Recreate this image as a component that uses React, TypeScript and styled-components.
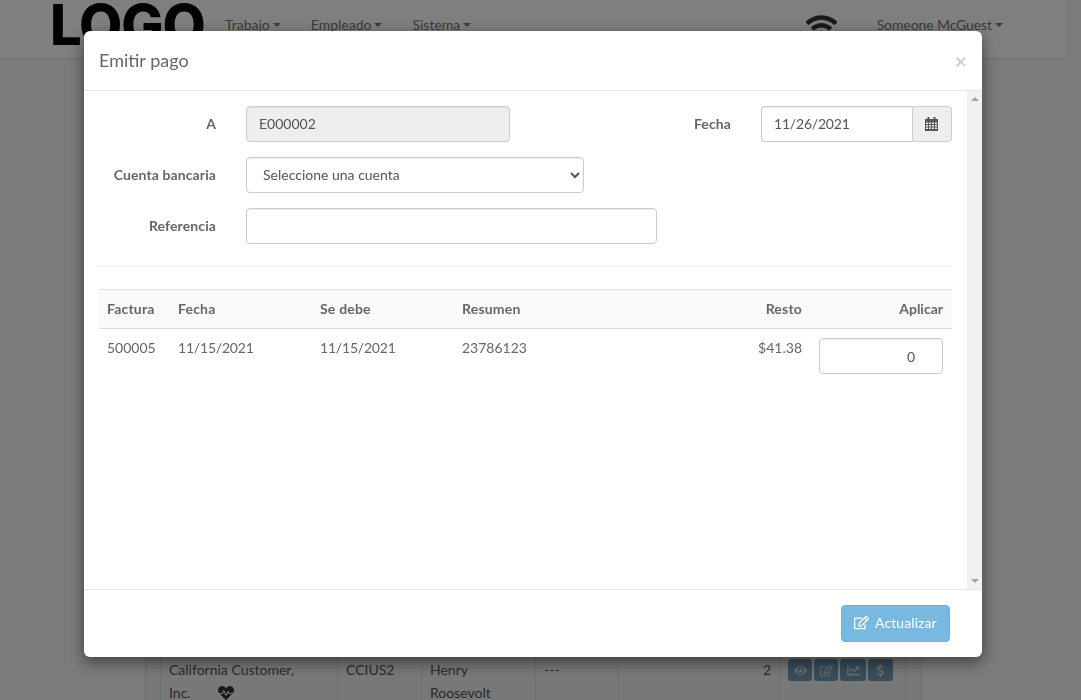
import React from 'react';
import styled, { createGlobalStyle } from 'styled-components';
import { FaEye, FaRegEdit, FaChartLine, FaDollarSign, FaWifi, FaHeartbeat } from 'react-icons/fa';

const GlobalStyle = createGlobalStyle`
  html, body {
    margin: 0;
    padding: 0;
    height: 100%;
    overflow: hidden;
    background: #f5f6f8;
    font-family: Lato, "Liberation Sans", sans-serif;
    font-size: 14px;
    color: #555;
  }
  * { box-sizing: border-box; }
`;

const Page = styled.div`
  width: 1081px;
  height: 700px;
  display: flex;
  overflow: hidden;
`;

const PageMain = styled.div`
  width: 1066px;
  flex: none;
`;

const PageGutter = styled.div`
  flex: 1;
  background: #f5f6f8;
`;

const Navbar = styled.nav`
  height: 59px;
  background: #fff;
  border-bottom: 1px solid #ddd;
  display: flex;
  align-items: flex-start;
  overflow: hidden;
  padding-left: 50px;
`;

const Logo = styled.div`
  font-family: Inter, "Liberation Sans", sans-serif;
  font-weight: 800;
  font-size: 56px;
  line-height: 50px;
  letter-spacing: -1px;
  color: #000;
  width: 175px;
  flex: none;
`;

const NavMenu = styled.a`
  margin: 15px 30px 0 0;
  line-height: 20px;
  color: #777;
  display: inline-flex;
  align-items: center;
`;

const UserMenu = styled(NavMenu)`
  margin-right: 0;
  letter-spacing: -0.1px;
`;

const Caret = styled.span`
  display: inline-block;
  margin-left: 3px;
  border-top: 4px solid currentColor;
  border-left: 4px solid transparent;
  border-right: 4px solid transparent;
`;

const NavRight = styled.div`
  margin-left: auto;
  display: flex;
  align-items: flex-start;
  padding-right: 63px;
`;

const WifiIcon = styled(FaWifi)`
  width: 31px;
  height: 25px;
  margin: 14px 40px 0 0;
  color: #333;
  stroke: currentColor;
  stroke-width: 16px;
`;

const Content = styled.div`
  padding: 546px 145px 0 145px;
`;

const BgTable = styled.table`
  width: 776px;
  border-collapse: collapse;
  border-left: 1px solid #ddd;
  border-right: 1px solid #ddd;
  background: #f0f0f0;
  table-layout: fixed;
`;

const BgCell = styled.td<{ $align?: string }>`
  border-left: 1px solid #ddd;
  border-right: 1px solid #ddd;
  padding: 53px 8px 8px;
  line-height: 23px;
  vertical-align: top;
  color: #555;
  text-align: ${({ $align }) => $align || 'left'};
`;

const HeartIcon = styled(FaHeartbeat)`
  width: 16px;
  height: 16px;
  margin-left: 27px;
  vertical-align: -3px;
  color: #333;
`;

const RowActions = styled.div`
  display: flex;
  gap: 2px;
  margin-top: 1px;
`;

const RowButton = styled.span<{ $width?: number }>`
  width: ${({ $width }) => $width || 24}px;
  flex: none;
  height: 22px;
  border-radius: 3px;
  background: #6f98b4;
  color: #c8d4dc;
  display: flex;
  align-items: center;
  justify-content: center;
  font-size: 13px;
`;

const Backdrop = styled.div`
  position: fixed;
  inset: 0;
  background: rgba(0, 0, 0, 0.5);
`;

const Modal = styled.div`
  position: fixed;
  left: 84px;
  top: 31px;
  width: 898px;
  height: 626px;
  background: #fff;
  border-radius: 6px;
  box-shadow: 0 5px 15px rgba(0, 0, 0, 0.5);
  display: flex;
  flex-direction: column;
  overflow: hidden;
`;

const ModalHeader = styled.div`
  height: 60px;
  flex: none;
  border-bottom: 1px solid #e5e5e5;
  display: flex;
  align-items: center;
  justify-content: space-between;
  padding: 0 15px;
`;

const ModalTitle = styled.h4`
  margin: 0;
  padding-bottom: 2px;
  font-size: 18px;
  font-weight: 400;
  color: #666;
`;

const CloseButton = styled.span`
  font-size: 21px;
  font-weight: 700;
  line-height: 1;
  color: #000;
  opacity: 0.2;
`;

const ModalMiddle = styled.div`
  flex: 1;
  display: flex;
  min-height: 0;
`;

const ModalBody = styled.div`
  flex: 1;
  padding: 15px 15px 0;
`;

const ScrollRail = styled.div`
  width: 15px;
  flex: none;
  background: #f1f1f1;
  display: flex;
  flex-direction: column;
  justify-content: space-between;
  align-items: center;
  padding: 6px 0;
`;

const ScrollArrow = styled.span<{ $down?: boolean }>`
  border-left: 4px solid transparent;
  border-right: 4px solid transparent;
  border-bottom: ${({ $down }) => ($down ? '0' : '4px solid #a3a3a3')};
  border-top: ${({ $down }) => ($down ? '4px solid #a3a3a3' : '0')};
`;

const FormRow = styled.div`
  display: flex;
  align-items: center;
  height: 36px;
  margin-bottom: 15px;
`;

const FieldLabel = styled.label<{ $width: number }>`
  width: ${({ $width }) => $width}px;
  flex: none;
  padding-bottom: 2px;
  text-align: right;
  font-weight: 700;
  letter-spacing: 0.1px;
  color: #666;
`;

const TextInput = styled.input<{ $width: number }>`
  width: ${({ $width }) => $width}px;
  height: 36px;
  margin-left: 30px;
  padding: 5px 12px 7px;
  font: inherit;
  color: #555;
  background: ${({ readOnly }) => (readOnly ? '#eee' : '#fff')};
  border: 1px solid #ccc;
  border-radius: 4px;
  box-shadow: inset 0 1px 1px rgba(0, 0, 0, 0.075);
  outline: none;
`;

const SelectInput = styled.select`
  width: 338px;
  height: 36px;
  margin-left: 30px;
  padding: 4px 12px 6px;
  font: inherit;
  color: #555;
  background: #fff;
  border: 1px solid #ccc;
  border-radius: 4px;
  box-shadow: inset 0 1px 1px rgba(0, 0, 0, 0.075);
`;

const DateGroup = styled.div`
  display: flex;
  width: 191px;
  margin-left: 30px;
`;

const DateInput = styled.input`
  width: 151px;
  height: 36px;
  padding: 5px 12px 7px;
  font: inherit;
  letter-spacing: -0.2px;
  color: #555;
  border: 1px solid #ccc;
  border-right: 0;
  border-radius: 4px 0 0 4px;
  box-shadow: inset 0 1px 1px rgba(0, 0, 0, 0.075);
  outline: none;
`;

const DateAddon = styled.span`
  width: 40px;
  height: 36px;
  padding-right: 2px;
  background: #eee;
  border: 1px solid #ccc;
  border-radius: 0 4px 4px 0;
  display: flex;
  align-items: center;
  justify-content: center;
`;

const Divider = styled.hr`
  margin: 22px 0;
  border: 0;
  border-top: 1px solid #eee;
`;

const InvoiceTable = styled.table`
  width: 100%;
  border-collapse: collapse;
  table-layout: fixed;
`;

const HeadCell = styled.th<{ $width?: number; $right?: boolean }>`
  width: ${({ $width }) => ($width ? `${$width}px` : 'auto')};
  height: 39px;
  padding: 7px 8px 9px;
  background: #f9f9f9;
  border-top: 1px solid #ddd;
  border-bottom: 1px solid #ddd;
  font-weight: 700;
  letter-spacing: 0.2px;
  color: #666;
  text-align: ${({ $right }) => ($right ? 'right' : 'left')};
`;

const ApplyHead = styled(HeadCell)`
  padding-right: 9px;
  letter-spacing: 0;
`;

const BodyCell = styled.td<{ $right?: boolean; $date?: boolean }>`
  padding: 9px 8px 8px;
  line-height: 20px;
  vertical-align: top;
  color: #666;
  letter-spacing: ${({ $date }) => ($date ? '-0.2px' : '0')};
  text-align: ${({ $right }) => ($right ? 'right' : 'left')};
`;

const ApplyInput = styled.input`
  display: block;
  width: 124px;
  height: 36px;
  margin: 0 1px 0 auto;
  padding: 6px 27px 6px 12px;
  font: inherit;
  color: #555;
  text-align: right;
  border: 1px solid #ccc;
  border-radius: 4px;
  box-shadow: inset 0 1px 1px rgba(0, 0, 0, 0.075);
  outline: none;
`;

const ModalFooter = styled.div`
  height: 68px;
  flex: none;
  border-top: 1px solid #e5e5e5;
  display: flex;
  align-items: center;
  justify-content: flex-end;
  padding: 0 32px 0 0;
`;

const UpdateButton = styled.button`
  height: 37px;
  width: 109px;
  padding: 0 0 2px 12px;
  font: inherit;
  letter-spacing: 0.1px;
  color: #fff;
  background: #77b9e0;
  border: 1px solid #6eb2db;
  border-radius: 4px;
  display: inline-flex;
  align-items: center;
  gap: 6px;

  svg {
    width: 15px;
    height: 15px;
  }
`;

const CalendarIcon = () => (
  <svg width="13" height="14" viewBox="0 0 13 14" fill="#555">
    <rect x="2.5" y="0" width="2" height="3" />
    <rect x="8.5" y="0" width="2" height="3" />
    <path d="M0 2h13v12H0zM1 5.5v1.5h2V5.5zM4 5.5v1.5h2V5.5zM7 5.5v1.5h2V5.5zM10 5.5v1.5h2V5.5zM1 8v1.5h2V8zM4 8v1.5h2V8zM7 8v1.5h2V8zM10 8v1.5h2V8zM1 10.5V12h2v-1.5zM4 10.5V12h2v-1.5zM7 10.5V12h2v-1.5zM10 10.5V12h2v-1.5z" fillRule="evenodd" />
  </svg>
);

const App: React.FC = () => {
  return (
    <>
      <GlobalStyle />
      <Page>
        <PageMain>
          <Navbar>
            <Logo>LOGO</Logo>
            <NavMenu>Trabajo<Caret /></NavMenu>
            <NavMenu>Empleado<Caret /></NavMenu>
            <NavMenu>Sistema<Caret /></NavMenu>
            <NavRight>
              <WifiIcon />
              <UserMenu>Someone McGuest<Caret /></UserMenu>
            </NavRight>
          </Navbar>
          <Content>
            <BgTable>
              <colgroup>
                <col width="15" /><col width="177" /><col width="84" /><col width="114" /><col width="83" /><col width="161" /><col width="126" /><col width="16" />
              </colgroup>
              <tbody>
                <tr>
                  <BgCell />
                  <BgCell>California Customer,<br />Inc.<HeartIcon /></BgCell>
                  <BgCell>CCIUS2</BgCell>
                  <BgCell>Henry Roosevolt</BgCell>
                  <BgCell>---</BgCell>
                  <BgCell $align="right">2</BgCell>
                  <BgCell>
                    <RowActions>
                      <RowButton><FaEye /></RowButton>
                      <RowButton><FaRegEdit /></RowButton>
                      <RowButton $width={26}><FaChartLine /></RowButton>
                      <RowButton $width={25}><FaDollarSign /></RowButton>
                    </RowActions>
                  </BgCell>
                  <BgCell />
                </tr>
              </tbody>
            </BgTable>
          </Content>
        </PageMain>
        <PageGutter />
      </Page>
      <Backdrop />
      <Modal>
        <ModalHeader>
          <ModalTitle>Emitir pago</ModalTitle>
          <CloseButton>×</CloseButton>
        </ModalHeader>
        <ModalMiddle>
          <ModalBody>
            <FormRow>
              <FieldLabel $width={117}>A</FieldLabel>
              <TextInput $width={264} readOnly value="E000002" />
              <FieldLabel $width={221}>Fecha</FieldLabel>
              <DateGroup>
                <DateInput readOnly value="11/26/2021" />
                <DateAddon><CalendarIcon /></DateAddon>
              </DateGroup>
            </FormRow>
            <FormRow>
              <FieldLabel $width={117}>Cuenta bancaria</FieldLabel>
              <SelectInput defaultValue="">
                <option value="">Seleccione una cuenta</option>
              </SelectInput>
            </FormRow>
            <FormRow>
              <FieldLabel $width={117}>Referencia</FieldLabel>
              <TextInput $width={411} />
            </FormRow>
            <Divider />
            <InvoiceTable>
              <thead>
                <tr>
                  <HeadCell $width={71}>Factura</HeadCell>
                  <HeadCell $width={142}>Fecha</HeadCell>
                  <HeadCell $width={142}>Se debe</HeadCell>
                  <HeadCell>Resumen</HeadCell>
                  <HeadCell $width={100} $right>Resto</HeadCell>
                  <ApplyHead $width={142} $right>Aplicar</ApplyHead>
                </tr>
              </thead>
              <tbody>
                <tr>
                  <BodyCell>500005</BodyCell>
                  <BodyCell $date>11/15/2021</BodyCell>
                  <BodyCell $date>11/15/2021</BodyCell>
                  <BodyCell>23786123</BodyCell>
                  <BodyCell $right>$41.38</BodyCell>
                  <BodyCell $right><ApplyInput readOnly value="0" /></BodyCell>
                </tr>
              </tbody>
            </InvoiceTable>
          </ModalBody>
          <ScrollRail>
            <ScrollArrow />
            <ScrollArrow $down />
          </ScrollRail>
        </ModalMiddle>
        <ModalFooter>
          <UpdateButton><FaRegEdit />Actualizar</UpdateButton>
        </ModalFooter>
      </Modal>
    </>
  );
};

export default App;
